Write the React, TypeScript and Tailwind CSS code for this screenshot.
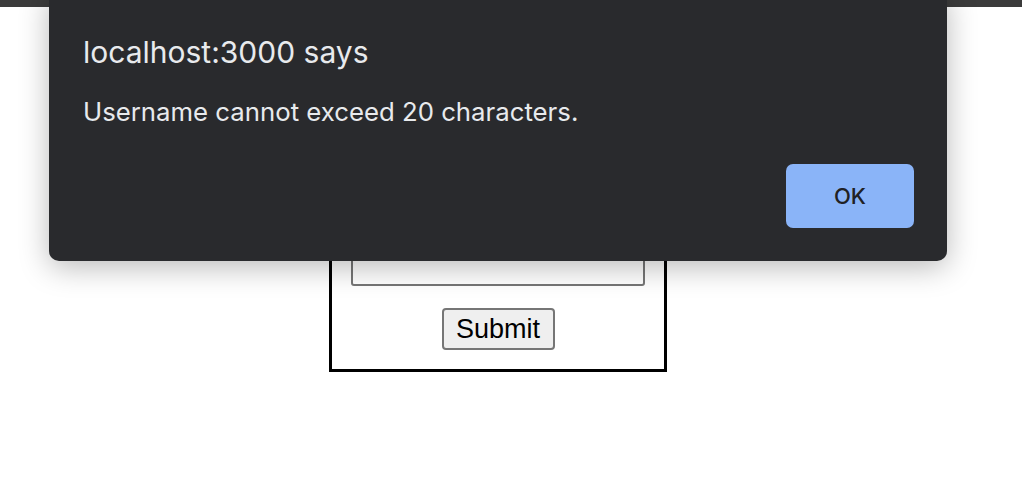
export default function App() {
  return (
    <div className="relative h-[500px] w-full overflow-hidden bg-white font-['Liberation_Sans',Arial,sans-serif]">
      <div className="h-[7px] w-full bg-[#3b3b3b]" />

      <div className="flex pl-[329px] pt-[175px]">
        <form
          className="flex w-[338px] flex-col items-center border-[3px] border-black px-[19px] pb-[19px] pt-[20px]"
          onSubmit={(e) => e.preventDefault()}
        >
          <label className="mb-2 self-start text-[22px] text-black">Username:</label>
          <input
            type="text"
            className="h-[40px] w-full rounded-[3px] border-2 border-[#767676] bg-white px-2 text-[20px]"
          />
          <button
            type="submit"
            className="mt-[22px] h-[42px] w-[113px] rounded-[4px] border-2 border-[#767676] bg-[#efefef] text-[27px] leading-none text-black"
          >
            Submit
          </button>
        </form>
      </div>

      {/* alert dialog */}
      <div className="absolute left-[49px] top-[-10px] flex h-[271px] w-[898px] flex-col rounded-[10px] bg-[#292a2d] pl-[34px] pr-[33px] shadow-[0_6px_30px_rgba(0,0,0,0.28)] font-['Inter','Noto_Sans',sans-serif]">
        <div className="mt-[47px] text-[30px] leading-none text-[#e8eaed]">localhost:3000 says</div>
        <div className="mt-[32px] text-[25.75px] leading-none text-[#e8eaed]">
          Username cannot exceed 20 characters.
        </div>
        <div className="mt-auto mb-[33px] flex justify-end">
          <button className="h-[64px] w-[128px] rounded-[7px] bg-[#8ab4f8] text-[22px] font-medium text-[#202124]">
            OK
          </button>
        </div>
      </div>
    </div>
  );
}
